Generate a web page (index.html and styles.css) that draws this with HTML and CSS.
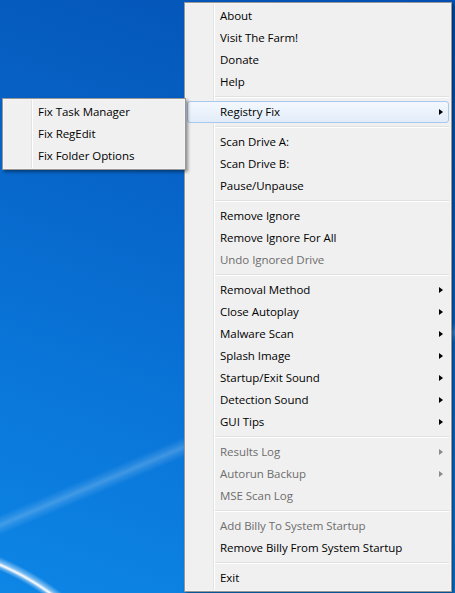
FILE: index.html
```html
<!DOCTYPE html>
<html>
<head>
<meta charset="utf-8">
<link rel="stylesheet" href="styles.css">
</head>
<body>
<div class="desktop">
  <div class="menu main-menu">
    <div class="item">About</div>
    <div class="item">Visit The Farm!</div>
    <div class="item">Donate</div>
    <div class="item">Help</div>
    <div class="sep"></div>
    <div class="item hot">Registry Fix<span class="arrow"></span></div>
    <div class="sep"></div>
    <div class="item">Scan Drive A:</div>
    <div class="item">Scan Drive B:</div>
    <div class="item">Pause/Unpause</div>
    <div class="sep"></div>
    <div class="item">Remove Ignore</div>
    <div class="item">Remove Ignore For All</div>
    <div class="item disabled">Undo Ignored Drive</div>
    <div class="sep"></div>
    <div class="item">Removal Method<span class="arrow"></span></div>
    <div class="item">Close Autoplay<span class="arrow"></span></div>
    <div class="item">Malware Scan<span class="arrow"></span></div>
    <div class="item">Splash Image<span class="arrow"></span></div>
    <div class="item">Startup/Exit Sound<span class="arrow"></span></div>
    <div class="item">Detection Sound<span class="arrow"></span></div>
    <div class="item">GUI Tips<span class="arrow"></span></div>
    <div class="sep"></div>
    <div class="item disabled">Results Log<span class="arrow"></span></div>
    <div class="item disabled">Autorun Backup<span class="arrow"></span></div>
    <div class="item disabled">MSE Scan Log</div>
    <div class="sep"></div>
    <div class="item disabled">Add Billy To System Startup</div>
    <div class="item">Remove Billy From System Startup</div>
    <div class="sep"></div>
    <div class="item">Exit</div>
  </div>
  <div class="menu sub-menu">
    <div class="item">Fix Task Manager</div>
    <div class="item">Fix RegEdit</div>
    <div class="item">Fix Folder Options</div>
  </div>
</div>
</body>
</html>
```

FILE: styles.css
```css
html, body {
  margin: 0;
  padding: 0;
}
body {
  width: 455px;
  height: 593px;
  overflow: hidden;
  font-family: "Segoe UI", "Open Sans", "Noto Sans", sans-serif;
  font-size: 11.5px;
  letter-spacing: -0.05px;
}
.desktop {
  position: relative;
  width: 455px;
  height: 593px;
  overflow: hidden;
  background:
    radial-gradient(circle at -100px 800px, transparent 250px, rgba(255,255,255,0.35) 253px, #ffffff 255.5px, rgba(255,255,255,0.45) 258px, transparent 263px),
    linear-gradient(157deg, transparent 65.5%, rgba(255,255,255,0.12) 66.3%, rgba(255,255,255,0.22) 66.8%, rgba(255,255,255,0.12) 67.3%, transparent 68.1%),
    linear-gradient(200deg, #0450b2 0%, #0762c6 35%, #0a76d9 70%, #0d86e6 100%);
}
.menu {
  position: absolute;
  box-sizing: border-box;
  display: flex;
  flex-direction: column;
  padding: 2px;
  border: 1px solid #979797;
  background-color: #f0f0f0;
  background-image: linear-gradient(to right, transparent 26px, #e2e3e3 26px, #e2e3e3 27px, #ffffff 27px, #ffffff 28px, transparent 28px);
  background-origin: content-box;
  background-clip: padding-box;
  box-shadow: inset 0 0 0 1px #f5f5f5, 2px 2px 3px rgba(0,0,0,0.4);
}
.main-menu {
  left: 184px;
  top: 2px;
  width: 268px;
}
.sub-menu {
  left: 2px;
  top: 98px;
  width: 184px;
}
.item {
  box-sizing: border-box;
  height: 22px;
  line-height: 22px;
  padding-left: 32px;
  display: flex;
  align-items: center;
  color: #000;
  white-space: nowrap;
  border: 1px solid transparent;
  border-radius: 3px;
}
.item.disabled {
  color: #6d6d6d;
}
.item.hot {
  border-color: #a8c8ef;
  background: linear-gradient(to bottom, #f4f8fd, #e2ecf9);
}
.arrow {
  margin-left: auto;
  margin-right: 5px;
  width: 0;
  height: 0;
  border-left: 4px solid #000;
  border-top: 3.5px solid transparent;
  border-bottom: 3.5px solid transparent;
}
.disabled .arrow {
  border-left-color: #8a8a8a;
}
.sep {
  height: 8px;
  margin-left: 28px;
  background: linear-gradient(to bottom, transparent 3px, #e0e0e0 3px, #e0e0e0 4px, #ffffff 4px, #ffffff 5px, transparent 5px);
}
```
